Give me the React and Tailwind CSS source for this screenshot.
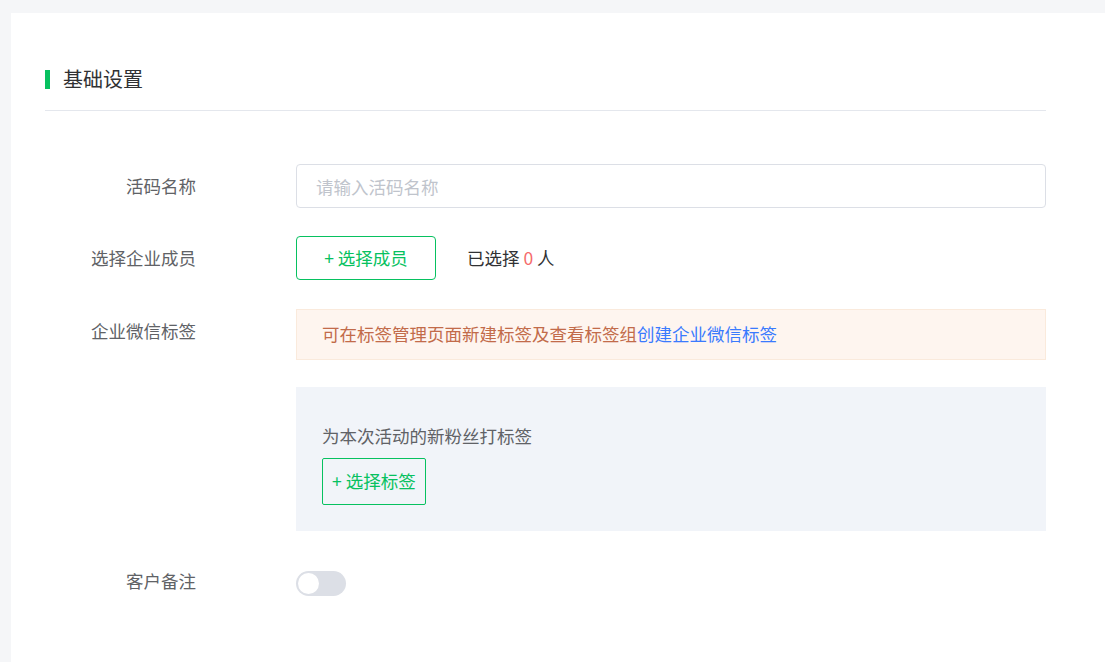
import React from "react";

const font = { fontFamily: '"Noto Sans CJK SC", "Noto Sans", sans-serif' };

function Row({ label, children, className = "" }) {
  return (
    <div className={"flex items-start " + className}>
      <div className="w-[251px] shrink-0 pr-[100px] text-right h-[44px] leading-[44px] text-[17.5px] text-[#606266]">
        {label}
      </div>
      <div className="flex-1 min-w-0">{children}</div>
    </div>
  );
}

export default function App() {
  return (
    <div className="min-h-[662px] bg-[#f5f6f8] pl-[11px] pt-[13px]" style={font}>
      <div className="bg-white min-h-[649px] pl-[34px] pr-[59px] pt-[52px] pb-10">
        {/* section header */}
        <div className="flex items-center h-[28px]">
          <span className="w-[5px] h-[19px] bg-[#07c160] mr-[13px]" />
          <span className="text-[20px] text-[#303133]">基础设置</span>
        </div>
        <div className="mt-[17px] border-b border-[#e4e7ed]" />

        <Row label="活码名称" className="mt-[53px]">
          <input
            placeholder="请输入活码名称"
            className="w-full h-[44px] rounded-[4px] border border-[#dcdfe6] px-[19px] text-[17.5px] text-[#606266] placeholder:text-[#c0c4cc] outline-none"
          />
        </Row>

        <Row label="选择企业成员" className="mt-[28px]">
          <div className="flex items-center h-[44px]">
            <button className="w-[140px] h-[44px] rounded-[4px] border border-[#07c160] text-[#07c160] text-[17.5px]">
              + 选择成员
            </button>
            <span className="ml-[31px] text-[17.5px] text-[#303133]">
              已选择 <span className="text-[#f56c6c]">0</span> 人
            </span>
          </div>
        </Row>

        <Row label="企业微信标签" className="mt-[29px]">
          <div className="h-[51px] border border-[#faeadc] bg-[#fef5ef] flex items-center px-[25px] text-[17.5px] text-[#c26b4a]">
            可在标签管理页面新建标签及查看标签组
            <span className="text-[#3a7afe]">创建企业微信标签</span>
          </div>
          <div className="mt-[27px] h-[144px] bg-[#f1f4f9] pl-[26px] pt-[37px]">
            <div className="text-[17.5px] leading-[24px] text-[#606266]">为本次活动的新粉丝打标签</div>
            <button className="mt-[10px] h-[47px] px-[9px] rounded-[2px] border border-[#07c160] text-[#07c160] text-[17.5px]">
              + 选择标签
            </button>
          </div>
        </Row>

        <Row label="客户备注" className="mt-[28px]">
          <div className="mt-[12px] w-[50px] h-[25px] rounded-full bg-[#dcdfe6] relative">
            <span className="absolute left-[2px] top-[2px] w-[21px] h-[21px] rounded-full bg-white" />
          </div>
        </Row>
      </div>
    </div>
  );
}
